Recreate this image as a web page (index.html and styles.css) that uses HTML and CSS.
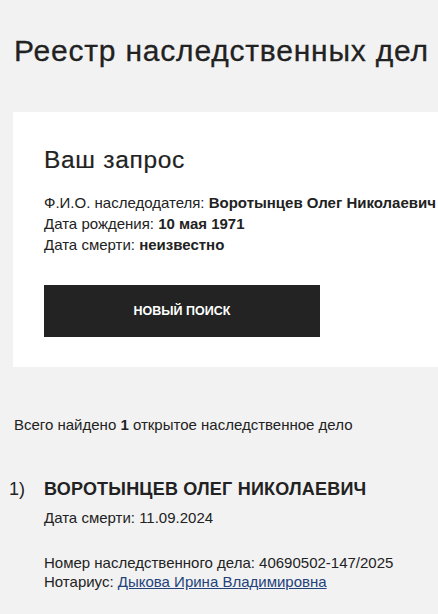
FILE: index.html
```html
<!DOCTYPE html>
<html lang="ru">
<head>
<meta charset="utf-8">
<link rel="stylesheet" href="styles.css">
</head>
<body>
<div class="page">
  <h1 class="title">Реестр наследственных дел</h1>
  <section class="card">
    <h2 class="card-title">Ваш запрос</h2>
    <div class="query">
      <div>Ф.И.О. наследодателя: <b>Воротынцев Олег Николаевич</b></div>
      <div>Дата рождения: <b>10 мая 1971</b></div>
      <div>Дата смерти: <b>неизвестно</b></div>
    </div>
    <button class="btn">НОВЫЙ ПОИСК</button>
  </section>
  <p class="found">Всего найдено <b>1</b> открытое наследственное дело</p>
  <div class="result">
    <div class="num">1)</div>
    <div class="res-body">
      <div class="res-name">ВОРОТЫНЦЕВ ОЛЕГ НИКОЛАЕВИЧ</div>
      <div class="res-line">Дата смерти: 11.09.2024</div>
      <div class="res-details">
        <div>Номер наследственного дела: 40690502-147/2025</div>
        <div>Нотариус: <a class="link" href="#">Дыкова Ирина Владимировна</a></div>
      </div>
    </div>
  </div>
</div>
</body>
</html>
```
FILE: styles.css
```css
html, body {
  margin: 0;
  padding: 0;
  background: #f2f2f2;
  overflow: hidden;
}
body {
  font-family: "Liberation Sans", Arial, sans-serif;
  color: #222;
}
.page {
  padding: 0 0 0 13px;
}
.title {
  margin: 0;
  padding-top: 33px;
  padding-left: 1px;
  font-size: 30px;
  font-weight: normal;
  letter-spacing: 0.8px;
  line-height: 36px;
  white-space: nowrap;
  -webkit-text-stroke: 0.3px #222;
}
.card {
  margin-top: 43px;
  background: #fff;
  padding: 33px 0 30px 31px;
}
.card-title {
  margin: 0;
  font-size: 24.5px;
  font-weight: normal;
  letter-spacing: 0.7px;
  line-height: 30px;
  -webkit-text-stroke: 0.2px #222;
}
.query {
  margin-top: 17px;
  font-size: 15px;
  line-height: 21px;
  white-space: nowrap;
}
.btn {
  display: block;
  margin-top: 30px;
  width: 276px;
  height: 52px;
  border: 0;
  background: #232323;
  color: #fff;
  font-family: "Liberation Sans", Arial, sans-serif;
  font-weight: bold;
  font-size: 12.5px;
}
.found {
  margin: 48px 0 0 1px;
  font-size: 15px;
  line-height: 20px;
}
.result {
  display: flex;
  margin-top: 42px;
  margin-left: -4px;
}
.num {
  width: 35px;
  font-size: 18px;
  line-height: 24px;
}
.res-name {
  font-size: 18px;
  font-weight: bold;
  letter-spacing: 0.2px;
  line-height: 24px;
}
.res-line {
  margin-top: 7px;
  font-size: 15px;
  line-height: 20px;
}
.res-details {
  margin-top: 25px;
  font-size: 15px;
  line-height: 19px;
}
.link {
  color: #23427a;
}
```
